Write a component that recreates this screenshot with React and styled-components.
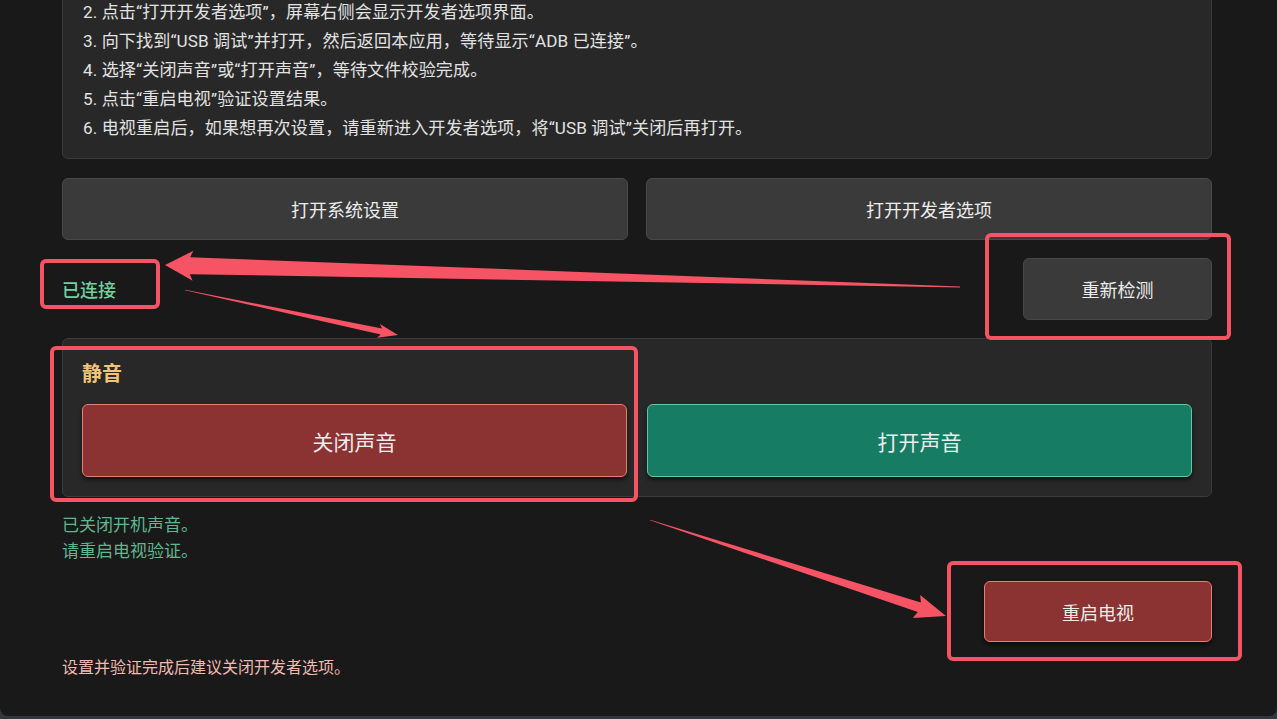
import React from "react";
import styled, { createGlobalStyle } from "styled-components";

const Global = createGlobalStyle`
  html, body { margin: 0; padding: 0; background: #34363c; }
  body { font-family: Roboto, "Noto Sans CJK SC", "Noto Sans", sans-serif; }
  * { box-sizing: border-box; }
`;

const Page = styled.div`
  position: relative;
  height: calc(100vh - 3px);
  background: #191919;
  border-radius: 0 0 8px 8px;
  overflow: hidden;
`;

const Content = styled.div`
  display: flex;
  flex-direction: column;
  padding: 0 65px 0 62px;
  margin-top: -19px;
`;

const Card = styled.div`
  background: #282828;
  border: 1px solid #3b3b3b;
  border-radius: 6px;
  padding: ${(p) => p.$pad || "16px 20px"};
`;

const Step = styled.div`
  font-size: 17.1px;
  line-height: 29px;
  color: #e2e2e2;
  letter-spacing: 0.1px;
`;

const ButtonRow = styled.div`
  display: grid;
  grid-template-columns: 1fr 1fr;
  gap: ${(p) => p.$gap || 18}px;
  margin-top: ${(p) => p.$mt || 0}px;
`;

const Btn = styled.button`
  font-family: inherit;
  height: ${(p) => p.$h || 62}px;
  width: ${(p) => (p.$w ? p.$w + "px" : "auto")};
  font-size: ${(p) => p.$fs || 18}px;
  color: #ececec;
  border-radius: 6px;
  cursor: pointer;
  background: ${(p) =>
    p.$kind === "red" ? "#8b3232" : p.$kind === "green" ? "#177c64" : "#3a3a3a"};
  border: ${(p) =>
    p.$kind === "red"
      ? "1.5px solid #e97c75"
      : p.$kind === "green"
      ? "1.5px solid #63c9a2"
      : "1px solid #484848"};
  box-shadow: ${(p) => (p.$kind ? "0 3px 4px rgba(0,0,0,0.55)" : "none")};
`;

const StatusRow = styled.div`
  display: flex;
  justify-content: space-between;
  align-items: center;
  margin-top: 18px;
`;

const Connected = styled.span`
  font-size: 18px;
  font-weight: 500;
  color: #74cf9e;
`;

const MuteCard = styled(Card)`
  margin-top: 18px;
`;

const Title = styled.div`
  font-size: 20px;
  line-height: 26px;
  font-weight: 700;
  color: #f2c47a;
`;

const Result = styled.div`
  margin-top: 15px;
  font-size: 17px;
  line-height: 26px;
  color: #5fb78e;
`;

const RightRow = styled.div`
  display: flex;
  justify-content: flex-end;
  margin-top: 17px;
`;

const Footer = styled.div`
  margin-top: 15px;
  font-size: 16px;
  line-height: 22px;
  color: #f0bbb1;
`;

const Overlay = styled.svg`
  position: absolute;
  left: 0;
  top: 0;
  width: 1277px;
  height: 719px;
  pointer-events: none;
`;

const RED = "#f65364";

function arrow(x1, y1, x2, y2, headLen, headHalf, shaftHalf, tailHalf) {
  const dx = x2 - x1, dy = y2 - y1;
  const L = Math.hypot(dx, dy);
  const ux = dx / L, uy = dy / L;
  const nx = -uy, ny = ux;
  const bx = x2 - ux * headLen, by = y2 - uy * headLen;
  const pts = [
    [x1 + nx * tailHalf, y1 + ny * tailHalf],
    [bx + nx * shaftHalf, by + ny * shaftHalf],
    [bx + nx * headHalf - ux * 3, by + ny * headHalf - uy * 3],
    [x2, y2],
    [bx - nx * headHalf - ux * 3, by - ny * headHalf - uy * 3],
    [bx - nx * shaftHalf, by - ny * shaftHalf],
    [x1 - nx * tailHalf, y1 - ny * tailHalf],
  ];
  return pts.map((p) => p.map((v) => v.toFixed(1)).join(",")).join(" ");
}

const steps = [
  "2. 点击“打开开发者选项”，屏幕右侧会显示开发者选项界面。",
  "3. 向下找到“USB 调试”并打开，然后返回本应用，等待显示“ADB 已连接”。",
  "4. 选择“关闭声音”或“打开声音”，等待文件校验完成。",
  "5. 点击“重启电视”验证设置结果。",
  "6. 电视重启后，如果想再次设置，请重新进入开发者选项，将“USB 调试”关闭后再打开。",
];

export default function App() {
  return (
    <>
      <Global />
      <Page>
        <Content>
          <Card $pad="16px 20px 15px">
            {steps.map((s) => (
              <Step key={s}>{s}</Step>
            ))}
          </Card>
          <ButtonRow $mt={19}>
            <Btn>打开系统设置</Btn>
            <Btn>打开开发者选项</Btn>
          </ButtonRow>
          <StatusRow>
            <Connected>已连接</Connected>
            <Btn $w={189}>重新检测</Btn>
          </StatusRow>
          <MuteCard $pad="22px 19px 19px">
            <Title>静音</Title>
            <ButtonRow $mt={17} $gap={20}>
              <Btn $kind="red" $h={73} $fs={21}>关闭声音</Btn>
              <Btn $kind="green" $h={73} $fs={21}>打开声音</Btn>
            </ButtonRow>
          </MuteCard>
          <Result>
            已关闭开机声音。
            <br />
            请重启电视验证。
          </Result>
          <RightRow>
            <Btn $kind="red" $w={228} $h={61}>重启电视</Btn>
          </RightRow>
          <Footer>设置并验证完成后建议关闭开发者选项。</Footer>
        </Content>
        <Overlay viewBox="0 0 1277 719">
          <g fill="none" stroke={RED} strokeWidth="4">
            <rect x="42" y="261" width="116" height="46" rx="4" />
            <rect x="987" y="235" width="242" height="103" rx="4" />
            <rect x="52" y="348" width="584" height="152" rx="4" />
            <rect x="949" y="563" width="291" height="96" rx="4" />
          </g>
          <g fill={RED}>
            <polygon points={arrow(960, 287, 165, 265, 25, 15, 8.5, 0.5)} />
            <polygon points={arrow(185, 290, 398, 335, 17, 7, 3, 0.3)} />
            <polygon points={arrow(650, 520, 946, 616, 28, 12, 5, 0.3)} />
          </g>
        </Overlay>
      </Page>
    </>
  );
}
